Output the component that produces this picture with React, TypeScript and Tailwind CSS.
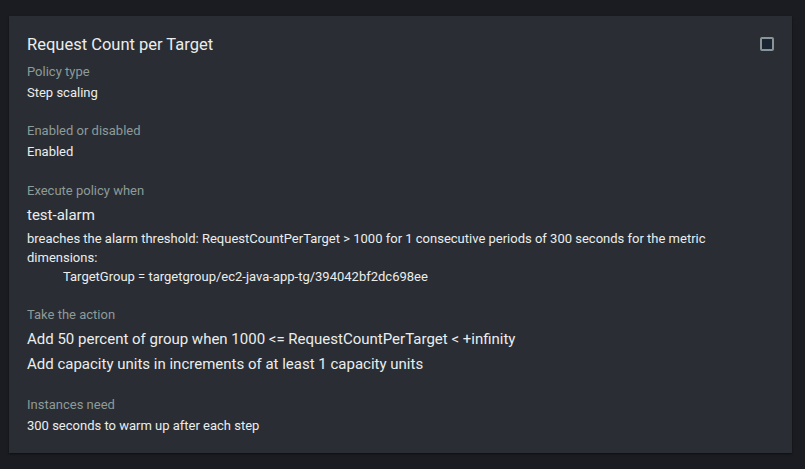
import React from 'react';

const font = { fontFamily: 'Roboto, "Liberation Sans", sans-serif' };

const Label: React.FC<{ children: React.ReactNode }> = ({ children }) => (
  <div className="text-[13px] leading-[20px] text-[#8d9b98]">{children}</div>
);

export default function App() {
  return (
    <div className="w-[805px] h-[469px] bg-[#1b1c21] pt-4 pl-[9px]" style={font}>
      <div className="w-[783px] h-[437px] bg-[#2a2d34] pl-[18px] pr-[18px] pt-[18px] shadow-[0_1px_2px_rgba(0,0,0,0.5)]">
        <div className="flex items-start justify-between">
          <h2 className="text-[16.5px] leading-[22px] text-[#eaeded]">Request Count per Target</h2>
          <div className="mt-[3px] w-[14px] h-[14px] rounded-[2px] border-2 border-[#879596] bg-[#1a2433]" />
        </div>

        <section className="mt-[6px]">
          <Label>Policy type</Label>
          <div className="text-[13px] leading-[22px] text-[#eaeded]">Step scaling</div>
        </section>

        <section className="mt-[17px]">
          <Label>Enabled or disabled</Label>
          <div className="text-[13px] leading-[22px] text-[#eaeded]">Enabled</div>
        </section>

        <section className="mt-[18px]">
          <Label>Execute policy when</Label>
          <div className="text-[15px] leading-[28px] text-[#eaeded]">test-alarm</div>
          <div className="text-[13px] leading-[19px] text-[#eaeded] max-w-[700px]">
            breaches the alarm threshold: RequestCountPerTarget &gt; 1000 for 1 consecutive periods of 300 seconds for the metric dimensions:
          </div>
          <div className="pl-9 text-[13px] leading-[20px] text-[#eaeded]">
            TargetGroup = targetgroup/ec2-java-app-tg/394042bf2dc698ee
          </div>
        </section>

        <section className="mt-[18px]">
          <Label>Take the action</Label>
          <div className="mt-px text-[15px] leading-[26px] text-[#eaeded]">
            Add 50 percent of group when 1000 &lt;= RequestCountPerTarget &lt; +infinity
          </div>
          <div className="text-[15px] leading-[24px] text-[#eaeded]">
            Add capacity units in increments of at least 1 capacity units
          </div>
        </section>

        <section className="mt-[19px]">
          <Label>Instances need</Label>
          <div className="text-[13px] leading-[22px] text-[#eaeded]">300 seconds to warm up after each step</div>
        </section>
      </div>
    </div>
  );
}
